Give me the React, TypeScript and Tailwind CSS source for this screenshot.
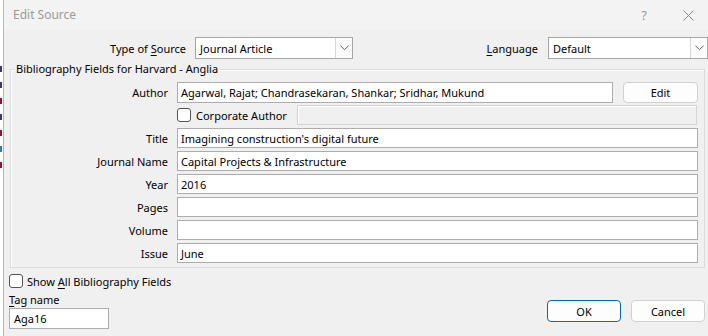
import React from "react";

const font = { fontFamily: '"Noto Sans", "Open Sans", sans-serif' };

function Chevron() {
  return (
    <svg width="9" height="6" viewBox="0 0 9 6" fill="none">
      <polyline points="0.5,0.8 4.5,4.6 8.5,0.8" stroke="#606060" strokeWidth="1" />
    </svg>
  );
}

function Combo({ value, w }: { value: string; w: string }) {
  return (
    <div className={`${w} h-[22px] border border-[#a6a6a6] bg-white flex items-stretch`}>
      <div className="flex-1 pl-[4px] flex items-center text-[11px] text-black leading-none">{value}</div>
      <div className="w-[17px] border-l border-[#d6d6d6] bg-[#fbfbfb] flex items-center justify-center">
        <Chevron />
      </div>
    </div>
  );
}

function Field({ label, value }: { label: string; value?: string }) {
  return (
    <div className="flex items-center h-[20px]">
      <div className="w-[157px] text-right text-[11px] leading-none text-black">{label}</div>
      <div className="ml-[9px] w-[521px] h-[20px] border border-[#adadad] bg-white flex items-center pl-[3px] text-[11px] leading-none text-black">
        {value}
      </div>
    </div>
  );
}

function CheckBox() {
  return <div className="w-[14px] h-[14px] rounded-[3px] border border-[#555] bg-white shrink-0" />;
}

const marks = [
  "bg-[#3b3b6b]", "bg-[#3b3b6b]", "bg-[#7a1f3d]", "bg-[#3b3b6b]", "bg-[#7a1f3d]", "bg-[#3b7aa8]", "bg-[#7a1f3d]",
];

export default function App() {
  return (
    <div className="w-[708px] h-[336px] flex overflow-hidden bg-white" style={font}>
      <div className="w-[3px] h-full bg-white flex flex-col pt-[66px] gap-[10px]">
        {marks.map((m, i) => (
          <div key={i} className={`w-[2px] h-[6px] ${m}`} />
        ))}
      </div>
      <div className="flex-1 h-full border-l border-[#b8b8b8] bg-[#f0f0f0] flex flex-col text-black">
        {/* title bar */}
        <div className="h-[30px] bg-[#f3f3f3] flex items-center pl-[9px] pr-[14px]">
          <span className="text-[12px] text-[#9a9a9a] leading-none">Edit Source</span>
          <span className="ml-auto text-[13px] text-[#9a9a9a] leading-none mr-[36px]">?</span>
          <svg width="11" height="11" viewBox="0 0 11 11">
            <path d="M0.5 0.5 L10.5 10.5 M10.5 0.5 L0.5 10.5" stroke="#8a8a8a" strokeWidth="1" />
          </svg>
        </div>
        {/* top row */}
        <div className="mt-[7px] flex items-center h-[22px]">
          <div className="w-[182px] text-right text-[11px] leading-none">
            Type of <span className="underline underline-offset-2">S</span>ource
          </div>
          <div className="ml-[9px]">
            <Combo value="Journal Article" w="w-[158px]" />
          </div>
          <div className="ml-auto text-[11px] leading-none">
            <span className="underline underline-offset-2">L</span>anguage
          </div>
          <div className="ml-[10px] mr-[0px]">
            <Combo value="Default" w="w-[160px]" />
          </div>
        </div>
        {/* group box */}
        <div className="relative ml-[6px] mr-[3px] mt-[10px] h-[199px] border border-[#dcdcdc] shadow-[inset_1px_1px_0_#ffffff]">
          <span className="absolute left-[4px] top-[-8px] bg-[#f0f0f0] px-[1px] text-[11px] leading-[14px]">
            Bibliography Fields for Harvard - Anglia
          </span>
          <div className="pt-[12px] flex flex-col">
            <div className="flex items-center h-[21px]">
              <div className="w-[157px] text-right text-[11px] leading-none">Author</div>
              <div className="ml-[9px] w-[436px] h-[21px] border border-[#adadad] bg-white flex items-center pl-[3px] text-[11px] leading-none">
                Agarwal, Rajat; Chandrasekaran, Shankar; Sridhar, Mukund
              </div>
              <div className="ml-[10px] w-[75px] h-[21px] rounded-[4px] border border-[#d0d0d0] bg-[#fdfdfd] flex items-center justify-center text-[11px] leading-none">
                Edit
              </div>
            </div>
            <div className="flex items-center h-[20px] mt-[2px]">
              <div className="w-[157px]" />
              <div className="ml-[9px] flex items-center">
                <CheckBox />
                <span className="ml-[5px] text-[11px] leading-none">Corporate Author</span>
              </div>
              <div className="ml-auto mr-[7px] w-[400px] h-[20px] border border-[#d4d4d4] bg-[#f0f0f0] shadow-[inset_1px_1px_0_#ffffff]" />
            </div>
            <div className="flex flex-col gap-[3px] mt-[3px]">
              <Field label="Title" value="Imagining construction's digital future" />
              <Field label="Journal Name" value="Capital Projects & Infrastructure" />
              <Field label="Year" value="2016" />
              <Field label="Pages" />
              <Field label="Volume" />
              <Field label="Issue" value="June" />
            </div>
          </div>
        </div>
        {/* bottom */}
        <div className="flex items-start">
          <div className="flex flex-col ml-[5px]">
            <div className="mt-[6px] flex items-center h-[14px]">
              <CheckBox />
              <span className="ml-[4px] text-[11px] leading-none">
                Show <span className="underline underline-offset-2">A</span>ll Bibliography Fields
              </span>
            </div>
            <div className="mt-[5px] text-[11px] leading-[14px]">
              <span className="underline underline-offset-2">T</span>ag name
            </div>
            <div className="mt-[1px] w-[100px] h-[21px] border border-[#adadad] bg-white flex items-center pl-[4px] text-[11px] leading-none">
              Aga16
            </div>
          </div>
          <div className="ml-auto mt-[32px] flex gap-[10px] mr-[3px]">
            <div className="w-[74px] h-[22px] rounded-[4px] border border-[#0067c0] bg-[#fdfdfd] flex items-center justify-center text-[11px] leading-none">
              OK
            </div>
            <div className="w-[74px] h-[22px] rounded-[4px] border border-[#d0d0d0] bg-[#fdfdfd] flex items-center justify-center text-[11px] leading-none">
              Cancel
            </div>
          </div>
        </div>
      </div>
    </div>
  );
}
